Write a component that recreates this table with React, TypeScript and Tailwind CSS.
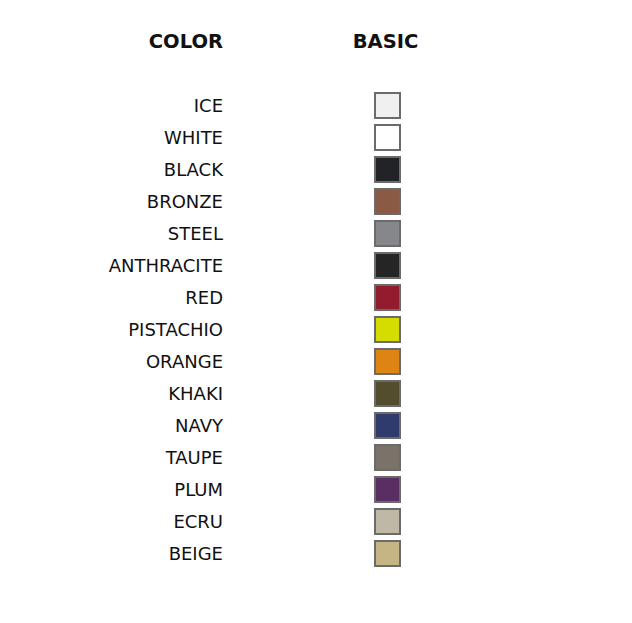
const colors = [
  { name: "ICE", hex: "#f0f0f0" },
  { name: "WHITE", hex: "#ffffff" },
  { name: "BLACK", hex: "#222326" },
  { name: "BRONZE", hex: "#8a5a45" },
  { name: "STEEL", hex: "#85878a" },
  { name: "ANTHRACITE", hex: "#252525" },
  { name: "RED", hex: "#921c2e" },
  { name: "PISTACHIO", hex: "#d4dc00" },
  { name: "ORANGE", hex: "#de8414" },
  { name: "KHAKI", hex: "#534d2e" },
  { name: "NAVY", hex: "#2e3b6c" },
  { name: "TAUPE", hex: "#79736a" },
  { name: "PLUM", hex: "#5a2d63" },
  { name: "ECRU", hex: "#bdb9a6" },
  { name: "BEIGE", hex: "#c5b584" },
];

export default function App() {
  return (
    <div className="w-[632px] h-[623px] bg-white text-[#111] font-['DejaVu_Sans',sans-serif]">
      <div className="grid grid-cols-[223px_80px] gap-x-[124px] pt-[28px]">
        <div className="h-[26px] pt-[2px] text-right text-[19.5px] font-bold leading-[24px]">COLOR</div>
        <div className="h-[26px] pt-[2px] pr-[3px] text-center text-[19.5px] font-bold leading-[24px]">BASIC</div>
        <div className="col-span-2 h-[35px]" />
        {colors.map((c) => (
          <div key={c.name} className="contents">
            <div className="h-[32px] pt-[2px] text-right text-[18px] leading-[30px]">{c.name}</div>
            <div className="h-[32px] flex items-center justify-center">
              <div
                className="w-[27px] h-[27px] border-2 border-[#6b6b6b]"
                style={{ backgroundColor: c.hex }}
              />
            </div>
          </div>
        ))}
      </div>
    </div>
  );
}
